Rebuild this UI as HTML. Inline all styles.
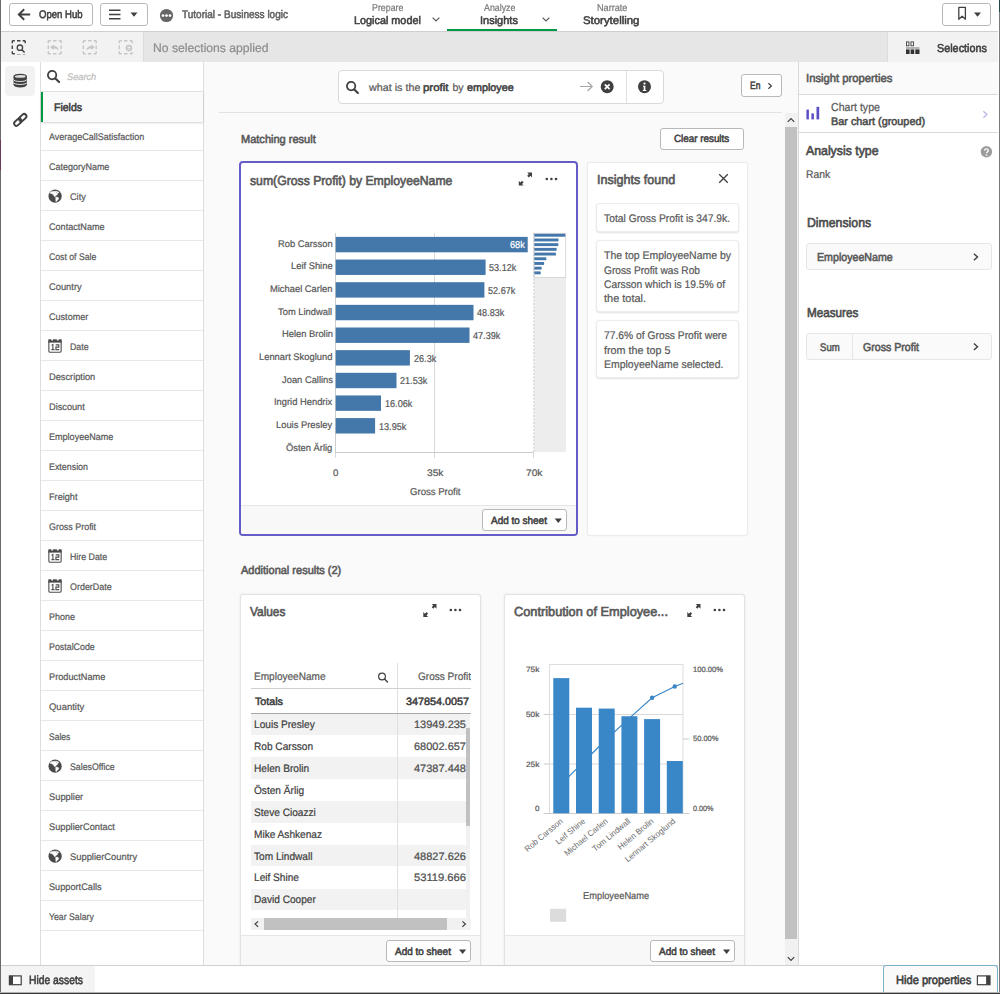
<!DOCTYPE html>
<html lang="en"><head><meta charset="utf-8"><title>Tutorial - Business logic - Insights</title>
<style>
html,body{margin:0;padding:0;}
body{width:1000px;height:994px;position:relative;overflow:hidden;background:#fff;filter:blur(0.3px);font-family:"Liberation Sans",sans-serif;}
.t{position:absolute;white-space:nowrap;transform-origin:0 0;display:block;text-rendering:geometricPrecision;}
.a{position:absolute;display:block;overflow:visible;}
</style></head><body>
<div style="position:absolute;left:204px;top:62px;width:594px;height:903px;background:#fafafa;"></div>
<div style="position:absolute;left:338px;top:70px;width:325.5px;height:33.5px;background:#fff;border:1px solid #d9d9d9;border-radius:4px;box-sizing:border-box;"></div>
<svg class="a" style="left:345px;top:80px" width="15" height="15" viewBox="-0.5 -0.5 15 15"><circle cx="5.6" cy="5.6" r="4.2" fill="none" stroke="#404040" stroke-width="1.8"/><path d="M8.9 8.9L12.4 12.4" stroke="#404040" stroke-width="2.1" stroke-linecap="round"/></svg>
<span class="t" style="left:369.00px;top:83.00px;font-size:10.6px;line-height:10.6px;color:#595959;-webkit-text-stroke:0.22px #595959;transform:scaleX(1.0144);">what is the</span>
<span class="t" style="left:422.80px;top:83.00px;font-size:10.6px;line-height:10.6px;color:#404040;-webkit-text-stroke:0.53px #404040;transform:scaleX(1.0790);">profit</span>
<span class="t" style="left:452.40px;top:83.00px;font-size:10.6px;line-height:10.6px;color:#595959;-webkit-text-stroke:0.22px #595959;">by</span>
<span class="t" style="left:466.80px;top:83.00px;font-size:10.6px;line-height:10.6px;color:#404040;-webkit-text-stroke:0.53px #404040;transform:scaleX(1.0152);">employee</span>
<svg class="a" style="left:579px;top:81px" width="15" height="11" viewBox="0 0 15 11"><path d="M1 5.5H13M8.6 1L13.2 5.5L8.6 10" fill="none" stroke="#a6a6a6" stroke-width="1.2"/></svg>
<svg class="a" style="left:600px;top:80px" width="14.4" height="14.4" viewBox="-0.5 0 14.4 14.4"><circle cx="6.7" cy="6.7" r="6.5" fill="#404040"/><path d="M4.3 4.3L9.1 9.1M9.1 4.3L4.3 9.1" stroke="#fff" stroke-width="1.7"/></svg>
<div style="position:absolute;left:625.5px;top:70.5px;width:1px;height:32.5px;background:#e0e0e0;"></div>
<svg class="a" style="left:637px;top:80px" width="14.4" height="14.4" viewBox="-0.8 0 14.4 14.4"><circle cx="6.7" cy="6.7" r="6.5" fill="#404040"/><circle cx="6.7" cy="3.6" r="1.1" fill="#fff"/><path d="M5.2 5.7H7.6V9.9H8.5V10.9H5V9.9H5.9V6.7H5.2Z" fill="#fff"/></svg>
<div style="position:absolute;left:741px;top:74px;width:40.5px;height:22.5px;background:#fff;border:1px solid #b8b8b8;border-radius:3px;box-sizing:border-box;"></div>
<span class="t" style="left:750.00px;top:81.00px;font-size:10.5px;line-height:10.5px;color:#404040;-webkit-text-stroke:0.53px #404040;transform:scaleX(0.8076);">En</span>
<svg class="a" style="left:767px;top:82px" width="6" height="8" viewBox="0 0 6 8"><path d="M1.4 1.2L4.4 4L1.4 6.8" fill="none" stroke="#404040" stroke-width="1.2"/></svg>
<div style="position:absolute;left:219px;top:111.7px;width:562.5px;height:1px;background:#e2e2e2;"></div>
<div style="position:absolute;left:784.5px;top:113px;width:13px;height:852px;background:#f1f1f1;"></div>
<div style="position:absolute;left:784.6px;top:127px;width:12.4px;height:811.8px;background:#c1c1c1;"></div>
<svg class="a" style="left:786px;top:117px" width="10" height="7" viewBox="-0.5 0 10 7"><path d="M1.3 4.8L4.5 1.6L7.7 4.8" fill="none" stroke="#404040" stroke-width="1.2"/></svg>
<svg class="a" style="left:786px;top:956px" width="10" height="7" viewBox="-0.5 0 10 7"><path d="M1.3 1.2L4.5 4.4L7.7 1.2" fill="none" stroke="#404040" stroke-width="1.2"/></svg>
<span class="t" style="left:240.50px;top:135.00px;font-size:11.5px;line-height:11.5px;color:#595959;-webkit-text-stroke:0.58px #595959;transform:scaleX(0.9585);">Matching result</span>
<div style="position:absolute;left:660px;top:127.5px;width:83.5px;height:22.2px;background:#fff;border:1px solid #b8b8b8;border-radius:3px;box-sizing:border-box;"></div>
<span class="t" style="left:673.80px;top:134.00px;font-size:10.5px;line-height:10.5px;color:#404040;-webkit-text-stroke:0.53px #404040;transform:scaleX(0.9367);">Clear results</span>
<div style="position:absolute;left:239.3px;top:161.3px;width:338.4px;height:375px;background:#fff;border:2px solid #655dc6;border-radius:4px;box-sizing:border-box;"></div>
<span class="t" style="left:249.50px;top:174.00px;font-size:13px;line-height:13px;color:#595959;-webkit-text-stroke:0.65px #595959;transform:scaleX(0.9401);">sum(Gross Profit) by EmployeeName</span>
<svg class="a" style="left:518px;top:172px" width="15" height="14" viewBox="0 0 15 14"><g fill="#404040"><path d="M9.2 0.6H14V5.4L12.4 3.8L10.8 5.4L9.2 3.8L10.8 2.2Z"/><path d="M0.8 13.6V8.8L2.4 10.4L4 8.8L5.6 10.4L4 12L5.6 13.6Z"/></g></svg>
<svg class="a" style="left:545px;top:177px" width="13" height="4" viewBox="0 0 13 4"><g fill="#404040"><circle cx="1.8" cy="2" r="1.3"/><circle cx="6.4" cy="2" r="1.3"/><circle cx="11" cy="2" r="1.3"/></g></svg>
<svg class="a" style="left:241px;top:225px" width="335" height="275" viewBox="241 225 335 275"><path d="M335.5 233V452.5" stroke="#cccccc" stroke-width="1"/><path d="M434.5 233V458M533.5 452V458M335.5 452.5V458" stroke="#d9d9d9" stroke-width="1"/><path d="M335 452.5H533.5" stroke="#cccccc" stroke-width="1"/><rect x="534" y="233" width="32" height="219" fill="#ededed"/><rect x="534" y="233.3" width="31.7" height="44.2" fill="#fff" stroke="#cfcfcf" stroke-width="0.8"/><path d="M533.8 233V452" stroke="#b0b8c8" stroke-width="0.7" stroke-dasharray="2 1.5"/><rect x="335.7" y="236.90" width="192.0" height="15.4" fill="#4477aa"/><rect x="534.3" y="233.80" width="31.0" height="2.9" fill="#4477aa"/><rect x="335.7" y="259.55" width="149.9" height="15.4" fill="#4477aa"/><rect x="534.3" y="238.50" width="24.2" height="2.9" fill="#4477aa"/><rect x="335.7" y="282.20" width="148.7" height="15.4" fill="#4477aa"/><rect x="534.3" y="243.20" width="24.0" height="2.9" fill="#4477aa"/><rect x="335.7" y="304.85" width="137.8" height="15.4" fill="#4477aa"/><rect x="534.3" y="247.90" width="22.3" height="2.9" fill="#4477aa"/><rect x="335.7" y="327.50" width="133.8" height="15.4" fill="#4477aa"/><rect x="534.3" y="252.60" width="21.6" height="2.9" fill="#4477aa"/><rect x="335.7" y="350.15" width="74.2" height="15.4" fill="#4477aa"/><rect x="534.3" y="257.30" width="12.0" height="2.9" fill="#4477aa"/><rect x="335.7" y="372.80" width="60.8" height="15.4" fill="#4477aa"/><rect x="534.3" y="262.00" width="9.8" height="2.9" fill="#4477aa"/><rect x="335.7" y="395.45" width="45.3" height="15.4" fill="#4477aa"/><rect x="534.3" y="266.70" width="7.3" height="2.9" fill="#4477aa"/><rect x="335.7" y="418.10" width="39.4" height="15.4" fill="#4477aa"/><rect x="534.3" y="271.40" width="6.4" height="2.9" fill="#4477aa"/></svg>
<span class="t" style="left:277.97px;top:240.00px;font-size:9.6px;line-height:9.6px;color:#595959;-webkit-text-stroke:0.22px #595959;transform:scaleX(0.9750);">Rob Carsson</span>
<span class="t" style="left:509.67px;top:241.00px;font-size:10px;line-height:10px;color:#fff;-webkit-text-stroke:0.22px #fff;transform:scaleX(0.9200);">68k</span>
<span class="t" style="left:290.97px;top:262.00px;font-size:9.6px;line-height:9.6px;color:#595959;-webkit-text-stroke:0.22px #595959;transform:scaleX(0.9750);">Leif Shine</span>
<span class="t" style="left:489.45px;top:264.00px;font-size:10px;line-height:10px;color:#595959;-webkit-text-stroke:0.22px #595959;transform:scaleX(0.9100);">53.12k</span>
<span class="t" style="left:270.17px;top:285.00px;font-size:9.6px;line-height:9.6px;color:#595959;-webkit-text-stroke:0.22px #595959;transform:scaleX(0.9750);">Michael Carlen</span>
<span class="t" style="left:488.18px;top:287.00px;font-size:10px;line-height:10px;color:#595959;-webkit-text-stroke:0.22px #595959;transform:scaleX(0.9100);">52.67k</span>
<span class="t" style="left:278.49px;top:308.00px;font-size:9.6px;line-height:9.6px;color:#595959;-webkit-text-stroke:0.22px #595959;transform:scaleX(0.9750);">Tom Lindwall</span>
<span class="t" style="left:477.33px;top:309.00px;font-size:10px;line-height:10px;color:#595959;-webkit-text-stroke:0.22px #595959;transform:scaleX(0.9100);">48.83k</span>
<span class="t" style="left:281.61px;top:330.00px;font-size:9.6px;line-height:9.6px;color:#595959;-webkit-text-stroke:0.22px #595959;transform:scaleX(0.9750);">Helen Brolin</span>
<span class="t" style="left:473.27px;top:332.00px;font-size:10px;line-height:10px;color:#595959;-webkit-text-stroke:0.22px #595959;transform:scaleX(0.9100);">47.39k</span>
<span class="t" style="left:259.22px;top:353.00px;font-size:9.6px;line-height:9.6px;color:#595959;-webkit-text-stroke:0.22px #595959;transform:scaleX(0.9750);">Lennart Skoglund</span>
<span class="t" style="left:413.74px;top:355.00px;font-size:10px;line-height:10px;color:#595959;-webkit-text-stroke:0.22px #595959;transform:scaleX(0.9100);">26.3k</span>
<span class="t" style="left:281.61px;top:376.00px;font-size:9.6px;line-height:9.6px;color:#595959;-webkit-text-stroke:0.22px #595959;transform:scaleX(0.9750);">Joan Callins</span>
<span class="t" style="left:400.28px;top:377.00px;font-size:10px;line-height:10px;color:#595959;-webkit-text-stroke:0.22px #595959;transform:scaleX(0.9100);">21.53k</span>
<span class="t" style="left:274.33px;top:398.00px;font-size:9.6px;line-height:9.6px;color:#595959;-webkit-text-stroke:0.22px #595959;transform:scaleX(0.9750);">Ingrid Hendrix</span>
<span class="t" style="left:384.84px;top:400.00px;font-size:10px;line-height:10px;color:#595959;-webkit-text-stroke:0.22px #595959;transform:scaleX(0.9100);">16.06k</span>
<span class="t" style="left:276.41px;top:421.00px;font-size:9.6px;line-height:9.6px;color:#595959;-webkit-text-stroke:0.22px #595959;transform:scaleX(0.9750);">Louis Presley</span>
<span class="t" style="left:378.88px;top:423.00px;font-size:10px;line-height:10px;color:#595959;-webkit-text-stroke:0.22px #595959;transform:scaleX(0.9100);">13.95k</span>
<span class="t" style="left:286.30px;top:444.00px;font-size:9.6px;line-height:9.6px;color:#595959;-webkit-text-stroke:0.22px #595959;transform:scaleX(0.9750);">Östen Ärlig</span>
<span class="t" style="left:333.05px;top:469.00px;font-size:9.5px;line-height:9.5px;color:#595959;-webkit-text-stroke:0.22px #595959;transform:scaleX(1.0220);">0</span>
<span class="t" style="left:426.80px;top:469.00px;font-size:9.5px;line-height:9.5px;color:#595959;-webkit-text-stroke:0.22px #595959;transform:scaleX(1.0707);">35k</span>
<span class="t" style="left:525.60px;top:469.00px;font-size:9.5px;line-height:9.5px;color:#595959;-webkit-text-stroke:0.22px #595959;transform:scaleX(1.0707);">70k</span>
<span class="t" style="left:409.50px;top:488.00px;font-size:10px;line-height:10px;color:#595959;-webkit-text-stroke:0.22px #595959;transform:scaleX(0.9566);">Gross Profit</span>
<div style="position:absolute;left:241.3px;top:504.5px;width:334.4px;height:29.5px;background:#f8f8f8;border-top:1px solid #e6e6e6;box-sizing:border-box;border-radius:0 0 2px 2px;"></div>
<div style="position:absolute;left:482px;top:509px;width:84.6px;height:22px;border:1px solid #b8b8b8;border-radius:3px;box-sizing:border-box;background:#fff;"></div>
<span class="t" style="left:491.00px;top:516.00px;font-size:10.5px;line-height:10.5px;color:#404040;-webkit-text-stroke:0.53px #404040;transform:scaleX(0.9480);">Add to sheet</span>
<svg class="a" style="left:554px;top:518px" width="9" height="6" viewBox="-0.4 -0.2 9 6"><path d="M0.3 0.2h7.2l-3.6 4.6z" fill="#404040"/></svg>
<div style="position:absolute;left:587px;top:162px;width:161px;height:374px;background:#fff;border:1px solid #ebebeb;border-radius:3px;box-sizing:border-box;box-shadow:0 0 2px rgba(0,0,0,.05);"></div>
<span class="t" style="left:596.60px;top:173.00px;font-size:13px;line-height:13px;color:#595959;-webkit-text-stroke:0.65px #595959;transform:scaleX(0.9657);">Insights found</span>
<svg class="a" style="left:718px;top:173px" width="11" height="11" viewBox="0 0 11 11"><path d="M1.2 1.2L9.8 9.8M9.8 1.2L1.2 9.8" stroke="#404040" stroke-width="1.3"/></svg>
<div style="position:absolute;left:596px;top:203px;width:143px;height:29px;background:#fff;border:1px solid #ececec;border-radius:3px;box-sizing:border-box;box-shadow:0 1px 2px rgba(0,0,0,.12);"></div>
<span class="t" style="left:604.00px;top:214.00px;font-size:11px;line-height:11px;color:#595959;-webkit-text-stroke:0.22px #595959;transform:scaleX(0.9368);">Total Gross Profit is 347.9k.</span>
<div style="position:absolute;left:596px;top:240px;width:143px;height:72px;background:#fff;border:1px solid #ececec;border-radius:3px;box-sizing:border-box;box-shadow:0 1px 2px rgba(0,0,0,.12);"></div>
<span class="t" style="left:604.00px;top:251.00px;font-size:11px;line-height:11px;color:#595959;-webkit-text-stroke:0.22px #595959;transform:scaleX(0.9528);">The top EmployeeName by</span>
<span class="t" style="left:604.00px;top:266.00px;font-size:11px;line-height:11px;color:#595959;-webkit-text-stroke:0.22px #595959;transform:scaleX(0.9238);">Gross Profit was Rob</span>
<span class="t" style="left:604.00px;top:280.00px;font-size:11px;line-height:11px;color:#595959;-webkit-text-stroke:0.22px #595959;transform:scaleX(0.9335);">Carsson which is 19.5% of</span>
<span class="t" style="left:604.00px;top:294.00px;font-size:11px;line-height:11px;color:#595959;-webkit-text-stroke:0.22px #595959;transform:scaleX(0.9954);">the total.</span>
<div style="position:absolute;left:596px;top:320px;width:143px;height:58px;background:#fff;border:1px solid #ececec;border-radius:3px;box-sizing:border-box;box-shadow:0 1px 2px rgba(0,0,0,.12);"></div>
<span class="t" style="left:604.00px;top:331.00px;font-size:11px;line-height:11px;color:#595959;-webkit-text-stroke:0.22px #595959;transform:scaleX(0.9358);">77.6% of Gross Profit were</span>
<span class="t" style="left:604.00px;top:346.00px;font-size:11px;line-height:11px;color:#595959;-webkit-text-stroke:0.22px #595959;transform:scaleX(0.9783);">from the top 5</span>
<span class="t" style="left:604.00px;top:360.00px;font-size:11px;line-height:11px;color:#595959;-webkit-text-stroke:0.22px #595959;transform:scaleX(0.9526);">EmployeeName selected.</span>
<span class="t" style="left:240.50px;top:566.00px;font-size:11.5px;line-height:11.5px;color:#595959;-webkit-text-stroke:0.58px #595959;transform:scaleX(0.9563);">Additional results (2)</span>
<div style="position:absolute;left:239.5px;top:593.5px;width:241.5px;height:372px;background:#fff;border:1px solid #e3e3e3;border-radius:3px 3px 0 0;box-sizing:border-box;box-shadow:0 0 2px rgba(0,0,0,.10);"></div>
<span class="t" style="left:249.50px;top:605.00px;font-size:13px;line-height:13px;color:#595959;-webkit-text-stroke:0.65px #595959;transform:scaleX(0.9129);">Values</span>
<svg class="a" style="left:422px;top:603px" width="16" height="15" viewBox="-0.5 -0.3 16 15"><g fill="#404040"><path d="M9.2 0.6H14V5.4L12.4 3.8L10.8 5.4L9.2 3.8L10.8 2.2Z"/><path d="M0.8 13.6V8.8L2.4 10.4L4 8.8L5.6 10.4L4 12L5.6 13.6Z"/></g></svg>
<svg class="a" style="left:449px;top:608px" width="13" height="4" viewBox="0 0 13 4"><g fill="#404040"><circle cx="1.8" cy="2" r="1.3"/><circle cx="6.4" cy="2" r="1.3"/><circle cx="11" cy="2" r="1.3"/></g></svg>
<div style="position:absolute;left:250.5px;top:663px;width:220px;height:268px;overflow:hidden;"><div style="position:absolute;left:0px;top:50.700000000000045px;width:215.8px;height:21.6px;background:#f2f2f2;"></div><div style="position:absolute;left:0px;top:94.40000000000009px;width:215.8px;height:21.6px;background:#f2f2f2;"></div><div style="position:absolute;left:0px;top:138.10000000000002px;width:215.8px;height:21.6px;background:#f2f2f2;"></div><div style="position:absolute;left:0px;top:181.80000000000007px;width:215.8px;height:21.6px;background:#f2f2f2;"></div><div style="position:absolute;left:0px;top:225.5px;width:215.8px;height:21.6px;background:#f2f2f2;"></div><div style="position:absolute;left:146.5px;top:0px;width:1px;height:254.5px;background:#e0e0e0;"></div><div style="position:absolute;left:0px;top:25px;width:220px;height:1px;background:#d0d0d0;"></div><div style="position:absolute;left:0px;top:49.6px;width:220px;height:1px;background:#a8a8a8;"></div><div style="position:absolute;left:215.8px;top:50.6px;width:4.2px;height:204px;background:#f1f1f1;"></div><div style="position:absolute;left:215.8px;top:64.5px;width:4.2px;height:98.7px;background:#c1c1c1;"></div><div style="position:absolute;left:0px;top:255.3px;width:220px;height:11.8px;background:#f1f1f1;"></div><div style="position:absolute;left:13.3px;top:255.3px;width:183.2px;height:11.8px;background:#c1c1c1;"></div><svg class="a" style="left:2px;top:257px" width="7" height="8" viewBox="-0.5 -0.6 7 8"><path d="M4.6 0.8L1.6 3.5L4.6 6.2" fill="none" stroke="#404040" stroke-width="1.2"/></svg><svg class="a" style="left:210px;top:257px" width="7" height="8" viewBox="0 -0.6 7 8"><path d="M1.4 0.8L4.4 3.5L1.4 6.2" fill="none" stroke="#404040" stroke-width="1.2"/></svg></div>
<span class="t" style="left:254.30px;top:672.00px;font-size:10.8px;line-height:10.8px;color:#595959;-webkit-text-stroke:0.22px #595959;transform:scaleX(0.9305);">EmployeeName</span>
<svg class="a" style="left:377px;top:672px" width="12" height="12" viewBox="-0.5 0 12 12"><circle cx="4.5" cy="4.5" r="3.4" fill="none" stroke="#404040" stroke-width="1.2"/><path d="M7 7L10 10" stroke="#404040" stroke-width="1.4" stroke-linecap="round"/></svg>
<div style="position:absolute;left:250.5px;top:663px;width:220px;height:50px;overflow:hidden;"><span class="t" style="left:167.00px;top:9.00px;font-size:10.8px;line-height:10.8px;color:#595959;-webkit-text-stroke:0.22px #595959;transform:scaleX(0.9310);">Gross Profit</span><span class="t" style="left:155.80px;top:34.00px;font-size:10.6px;line-height:10.6px;color:#404040;-webkit-text-stroke:0.53px #404040;transform:scaleX(1.0188);">347854.0057</span></div>
<span class="t" style="left:254.50px;top:697.00px;font-size:10.6px;line-height:10.6px;color:#404040;-webkit-text-stroke:0.53px #404040;transform:scaleX(1.0099);">Totals</span>
<span class="t" style="left:254.30px;top:720.00px;font-size:10.8px;line-height:10.8px;color:#404040;-webkit-text-stroke:0.22px #404040;transform:scaleX(0.9370);">Louis Presley</span>
<span class="t" style="left:414.20px;top:720.00px;font-size:10.8px;line-height:10.8px;color:#4d4d4d;-webkit-text-stroke:0.22px #4d4d4d;transform:scaleX(1.0185);">13949.235</span>
<span class="t" style="left:254.30px;top:742.00px;font-size:10.8px;line-height:10.8px;color:#404040;-webkit-text-stroke:0.22px #404040;transform:scaleX(0.9370);">Rob Carsson</span>
<span class="t" style="left:414.20px;top:742.00px;font-size:10.8px;line-height:10.8px;color:#4d4d4d;-webkit-text-stroke:0.22px #4d4d4d;transform:scaleX(1.0185);">68002.657</span>
<span class="t" style="left:254.30px;top:764.00px;font-size:10.8px;line-height:10.8px;color:#404040;-webkit-text-stroke:0.22px #404040;transform:scaleX(0.9370);">Helen Brolin</span>
<span class="t" style="left:414.20px;top:764.00px;font-size:10.8px;line-height:10.8px;color:#4d4d4d;-webkit-text-stroke:0.22px #4d4d4d;transform:scaleX(1.0185);">47387.448</span>
<span class="t" style="left:254.30px;top:786.00px;font-size:10.8px;line-height:10.8px;color:#404040;-webkit-text-stroke:0.22px #404040;transform:scaleX(0.9370);">Östen Ärlig</span>
<span class="t" style="left:254.30px;top:808.00px;font-size:10.8px;line-height:10.8px;color:#404040;-webkit-text-stroke:0.22px #404040;transform:scaleX(0.9370);">Steve Cioazzi</span>
<span class="t" style="left:254.30px;top:830.00px;font-size:10.8px;line-height:10.8px;color:#404040;-webkit-text-stroke:0.22px #404040;transform:scaleX(0.9370);">Mike Ashkenaz</span>
<span class="t" style="left:254.30px;top:852.00px;font-size:10.8px;line-height:10.8px;color:#404040;-webkit-text-stroke:0.22px #404040;transform:scaleX(0.9370);">Tom Lindwall</span>
<span class="t" style="left:414.20px;top:852.00px;font-size:10.8px;line-height:10.8px;color:#4d4d4d;-webkit-text-stroke:0.22px #4d4d4d;transform:scaleX(1.0185);">48827.626</span>
<span class="t" style="left:254.30px;top:873.00px;font-size:10.8px;line-height:10.8px;color:#404040;-webkit-text-stroke:0.22px #404040;transform:scaleX(0.9370);">Leif Shine</span>
<span class="t" style="left:414.20px;top:873.00px;font-size:10.8px;line-height:10.8px;color:#4d4d4d;-webkit-text-stroke:0.22px #4d4d4d;transform:scaleX(1.0348);">53119.666</span>
<span class="t" style="left:254.30px;top:895.00px;font-size:10.8px;line-height:10.8px;color:#404040;-webkit-text-stroke:0.22px #404040;transform:scaleX(0.9370);">David Cooper</span>
<div style="position:absolute;left:240.5px;top:935.3px;width:239.5px;height:30px;background:#f8f8f8;border-top:1px solid #e6e6e6;box-sizing:border-box;"></div>
<div style="position:absolute;left:386.3px;top:940px;width:84.6px;height:22px;border:1px solid #b8b8b8;border-radius:3px;box-sizing:border-box;background:#fff;"></div>
<span class="t" style="left:395.30px;top:947.00px;font-size:10.5px;line-height:10.5px;color:#404040;-webkit-text-stroke:0.53px #404040;transform:scaleX(0.9480);">Add to sheet</span>
<svg class="a" style="left:458px;top:949px" width="9" height="6" viewBox="-0.7 -0.2 9 6"><path d="M0.3 0.2h7.2l-3.6 4.6z" fill="#404040"/></svg>
<div style="position:absolute;left:504px;top:593.5px;width:241px;height:372px;background:#fff;border:1px solid #e3e3e3;border-radius:3px 3px 0 0;box-sizing:border-box;box-shadow:0 0 2px rgba(0,0,0,.10);"></div>
<span class="t" style="left:514.00px;top:605.00px;font-size:13px;line-height:13px;color:#595959;-webkit-text-stroke:0.65px #595959;transform:scaleX(0.9818);">Contribution of Employee...</span>
<svg class="a" style="left:686px;top:603px" width="16" height="15" viewBox="-0.5 -0.3 16 15"><g fill="#404040"><path d="M9.2 0.6H14V5.4L12.4 3.8L10.8 5.4L9.2 3.8L10.8 2.2Z"/><path d="M0.8 13.6V8.8L2.4 10.4L4 8.8L5.6 10.4L4 12L5.6 13.6Z"/></g></svg>
<svg class="a" style="left:713px;top:608px" width="13" height="4" viewBox="0 0 13 4"><g fill="#404040"><circle cx="1.8" cy="2" r="1.3"/><circle cx="6.4" cy="2" r="1.3"/><circle cx="11" cy="2" r="1.3"/></g></svg>
<svg class="a" style="left:505px;top:650px" width="239" height="280" viewBox="505 650 239 280"><rect x="549.4" y="664.6" width="133.6" height="148.9" fill="#fff" stroke="#d9d9d9" stroke-width="0.9"/><path d="M549.4 714.5H683M549.4 764H683" stroke="#d9d9d9" stroke-width="1"/><path d="M543.7 714.5H549.4M543.7 764H549.4M543.7 813.5H689.5M683 739H689.5" stroke="#cccccc" stroke-width="1"/><path d="M561.3 784.2 L584.0 761.5 L606.7 739.0 L629.4 718.1 L652.1 697.8 L674.8 686.5 L683.0 683.2" fill="none" stroke="#3a87c8" stroke-width="1.15"/><rect x="553.3" y="678.11" width="16" height="135.19" fill="#3a87c8"/><rect x="576.0" y="707.70" width="16" height="105.60" fill="#3a87c8"/><rect x="598.7" y="708.59" width="16" height="104.71" fill="#3a87c8"/><rect x="621.4" y="716.23" width="16" height="97.07" fill="#3a87c8"/><rect x="644.1" y="719.09" width="16" height="94.21" fill="#3a87c8"/><rect x="666.8" y="761.02" width="16" height="52.28" fill="#3a87c8"/><circle cx="652.1" cy="697.8" r="2.2" fill="#3a87c8"/><circle cx="674.8" cy="686.5" r="2.2" fill="#3a87c8"/><rect x="550" y="908.8" width="16.2" height="13" fill="#dcdcdc"/></svg>
<span class="t" style="left:526.35px;top:666.00px;font-size:7.7px;line-height:7.7px;color:#595959;-webkit-text-stroke:0.22px #595959;transform:scaleX(1.0673);">75k</span>
<span class="t" style="left:526.35px;top:711.00px;font-size:7.7px;line-height:7.7px;color:#595959;-webkit-text-stroke:0.22px #595959;transform:scaleX(1.0673);">50k</span>
<span class="t" style="left:526.35px;top:761.00px;font-size:7.7px;line-height:7.7px;color:#595959;-webkit-text-stroke:0.22px #595959;transform:scaleX(1.0673);">25k</span>
<span class="t" style="left:535.10px;top:805.00px;font-size:7.7px;line-height:7.7px;color:#595959;-webkit-text-stroke:0.22px #595959;transform:scaleX(1.0508);">0</span>
<span class="t" style="left:693.30px;top:666.00px;font-size:7.7px;line-height:7.7px;color:#595959;-webkit-text-stroke:0.22px #595959;transform:scaleX(0.9869);">100.00%</span>
<span class="t" style="left:693.30px;top:735.00px;font-size:7.7px;line-height:7.7px;color:#595959;-webkit-text-stroke:0.22px #595959;transform:scaleX(0.9764);">50.00%</span>
<span class="t" style="left:693.30px;top:805.00px;font-size:7.7px;line-height:7.7px;color:#595959;-webkit-text-stroke:0.22px #595959;transform:scaleX(0.9389);">0.00%</span>
<span class="t" style="left:516.01px;top:815.47px;font-size:8.3px;line-height:8.3px;color:#6a6a6a;transform-origin:100% 84.65%;transform:rotate(-40deg) scaleX(0.97);width:48.44px;margin-left:-1.45px">Rob Carsson</span>
<span class="t" style="left:549.89px;top:815.47px;font-size:8.3px;line-height:8.3px;color:#6a6a6a;transform-origin:100% 84.65%;transform:rotate(-40deg) scaleX(0.97);width:36.92px;margin-left:-1.11px">Leif Shine</span>
<span class="t" style="left:554.70px;top:815.47px;font-size:8.3px;line-height:8.3px;color:#6a6a6a;transform-origin:100% 84.65%;transform:rotate(-40deg) scaleX(0.97);width:55.36px;margin-left:-1.66px">Michael Carlen</span>
<span class="t" style="left:584.56px;top:815.47px;font-size:8.3px;line-height:8.3px;color:#6a6a6a;transform-origin:100% 84.65%;transform:rotate(-40deg) scaleX(0.97);width:47.98px;margin-left:-1.44px">Tom Lindwall</span>
<span class="t" style="left:609.94px;top:815.47px;font-size:8.3px;line-height:8.3px;color:#6a6a6a;transform-origin:100% 84.65%;transform:rotate(-40deg) scaleX(0.97);width:45.21px;margin-left:-1.36px">Helen Brolin</span>
<span class="t" style="left:613.38px;top:815.47px;font-size:8.3px;line-height:8.3px;color:#6a6a6a;transform-origin:100% 84.65%;transform:rotate(-40deg) scaleX(0.97);width:65.07px;margin-left:-1.95px">Lennart Skoglund</span>
<span class="t" style="left:583.30px;top:892.00px;font-size:10px;line-height:10px;color:#595959;-webkit-text-stroke:0.22px #595959;transform:scaleX(0.9305);">EmployeeName</span>
<div style="position:absolute;left:505px;top:935.3px;width:239px;height:30px;background:#f8f8f8;border-top:1px solid #e6e6e6;box-sizing:border-box;"></div>
<div style="position:absolute;left:650.3px;top:940px;width:84.6px;height:22px;border:1px solid #b8b8b8;border-radius:3px;box-sizing:border-box;background:#fff;"></div>
<span class="t" style="left:659.30px;top:947.00px;font-size:10.5px;line-height:10.5px;color:#404040;-webkit-text-stroke:0.53px #404040;transform:scaleX(0.9480);">Add to sheet</span>
<svg class="a" style="left:722px;top:949px" width="9" height="6" viewBox="-0.7 -0.2 9 6"><path d="M0.3 0.2h7.2l-3.6 4.6z" fill="#404040"/></svg>
<div style="position:absolute;left:0px;top:0px;width:1000px;height:31px;background:#fff;border-bottom:1px solid #cfcfcf;box-sizing:content-box;"></div>
<div style="position:absolute;left:9px;top:3px;width:84px;height:23px;border:1px solid #b8b8b8;border-radius:3px;box-sizing:border-box;background:#fff;"></div>
<svg class="a" style="left:17px;top:8px" width="14" height="13" viewBox="0 0 14 13"><path d="M7.2 1.2 L1.8 6.5 L7.2 11.8 M2 6.5 H13.2" fill="none" stroke="#404040" stroke-width="1.9"/></svg>
<span class="t" style="left:39.00px;top:10.00px;font-size:11px;line-height:11px;color:#404040;-webkit-text-stroke:0.55px #404040;transform:scaleX(0.8679);">Open Hub</span>
<div style="position:absolute;left:100px;top:3px;width:48px;height:23px;border:1px solid #b8b8b8;border-radius:3px;box-sizing:border-box;background:#fff;"></div>
<svg class="a" style="left:108px;top:8px" width="36" height="13" viewBox="0 0 36 13"><path d="M1 2.2H12.5M1 6.5H12.5M1 10.8H12.5" stroke="#404040" stroke-width="1.5"/><path d="M22.5 4.6h7l-3.5 4.2z" fill="#404040"/></svg>
<svg class="a" style="left:159px;top:8px" width="15" height="15" viewBox="0 0 15 15"><circle cx="7.5" cy="7.5" r="6.6" fill="#666"/><circle cx="4" cy="7.6" r="1.35" fill="#fff"/><circle cx="7.5" cy="7.6" r="1.35" fill="#fff"/><circle cx="11" cy="7.6" r="1.35" fill="#fff"/></svg>
<span class="t" style="left:181.50px;top:10.00px;font-size:11px;line-height:11px;color:#636363;-webkit-text-stroke:0.55px #636363;transform:scaleX(0.9109);">Tutorial - Business logic</span>
<span class="t" style="left:371.60px;top:4.00px;font-size:10px;line-height:10px;color:#7a7a7a;-webkit-text-stroke:0.22px #7a7a7a;transform:scaleX(0.8826);">Prepare</span>
<span class="t" style="left:353.60px;top:16.00px;font-size:11px;line-height:11px;color:#404040;-webkit-text-stroke:0.55px #404040;transform:scaleX(0.9850);">Logical model</span>
<svg class="a" style="left:431px;top:16px" width="10" height="7" viewBox="0 0 10 7"><path d="M1.6 1.6 L5 5 L8.4 1.6" fill="none" stroke="#595959" stroke-width="1.2"/></svg>
<span class="t" style="left:483.60px;top:4.00px;font-size:10px;line-height:10px;color:#7a7a7a;-webkit-text-stroke:0.22px #7a7a7a;transform:scaleX(0.8826);">Analyze</span>
<span class="t" style="left:480.00px;top:16.00px;font-size:11px;line-height:11px;color:#404040;-webkit-text-stroke:0.55px #404040;">Insights</span>
<svg class="a" style="left:541px;top:16px" width="10" height="7" viewBox="0 0 10 7"><path d="M1.6 1.6 L5 5 L8.4 1.6" fill="none" stroke="#595959" stroke-width="1.2"/></svg>
<div style="position:absolute;left:447.4px;top:28.6px;width:109.2px;height:2.6px;background:#009845;"></div>
<span class="t" style="left:596.60px;top:4.00px;font-size:10px;line-height:10px;color:#7a7a7a;-webkit-text-stroke:0.22px #7a7a7a;transform:scaleX(0.9117);">Narrate</span>
<span class="t" style="left:583.40px;top:16.00px;font-size:11px;line-height:11px;color:#404040;-webkit-text-stroke:0.55px #404040;transform:scaleX(1.0370);">Storytelling</span>
<div style="position:absolute;left:942px;top:3px;width:49px;height:23px;border:1px solid #b8b8b8;border-radius:3px;box-sizing:border-box;background:#fff;"></div>
<svg class="a" style="left:957px;top:6px" width="26" height="16" viewBox="0 0 26 16"><path d="M1.8 1.4H8.4V13.2L5.1 10.3L1.8 13.2Z" fill="none" stroke="#404040" stroke-width="1.3" stroke-linejoin="round"/><path d="M17 6.6h7l-3.5 4.2z" fill="#404040"/></svg>
<div style="position:absolute;left:0px;top:32px;width:1000px;height:29.5px;background:#e6e6e6;"></div>
<div style="position:absolute;left:0px;top:32px;width:143px;height:29.5px;background:#f2f2f2;border-right:1px solid #dcdcdc;"></div>
<div style="position:absolute;left:886.6px;top:32px;width:113.4px;height:29.5px;background:#f2f2f2;border-left:1px solid #dcdcdc;"></div>
<svg class="a" style="left:11px;top:39px" width="16" height="16" viewBox="0 0 16 16"><rect x="1.3" y="1.8" width="12.9" height="12.9" fill="none" stroke="#404040" stroke-width="1.4" stroke-dasharray="2.5 2.2 3.5 2.2 2.5 0"/><rect x="6" y="6.2" width="9" height="9" fill="#f2f2f2"/><circle cx="8.9" cy="8.7" r="2.7" fill="#f2f2f2" stroke="#404040" stroke-width="1.3"/><path d="M10.9 10.8L13.6 13.6" stroke="#404040" stroke-width="1.5"/></svg>
<svg class="a" style="left:47px;top:39px" width="16" height="16" viewBox="0 0 16 16"><rect x="1.3" y="1.8" width="12.9" height="12.9" fill="none" stroke="#c6c6c6" stroke-width="1.4" stroke-dasharray="2.5 2.2 3.5 2.2 2.5 0"/><rect x="3" y="5" width="9" height="8" fill="#f2f2f2"/><path d="M3.2 8.2L6.8 5.4V7.1C9.6 7.1 11.4 8.6 11.6 11.6C10.6 9.9 9.2 9.4 6.8 9.4V11Z" fill="#c6c6c6"/></svg>
<svg class="a" style="left:82px;top:39px" width="16" height="16" viewBox="0 0 16 16"><rect x="1.3" y="1.8" width="12.9" height="12.9" fill="none" stroke="#c6c6c6" stroke-width="1.4" stroke-dasharray="2.5 2.2 3.5 2.2 2.5 0"/><rect x="4" y="5" width="9" height="8" fill="#f2f2f2"/><path d="M12.8 8.2L9.2 5.4V7.1C6.4 7.1 4.6 8.6 4.4 11.6C5.4 9.9 6.8 9.4 9.2 9.4V11Z" fill="#c6c6c6"/></svg>
<svg class="a" style="left:118px;top:39px" width="16" height="16" viewBox="0 0 16 16"><rect x="1.3" y="1.8" width="12.9" height="12.9" fill="none" stroke="#c6c6c6" stroke-width="1.4" stroke-dasharray="2.5 2.2 3.5 2.2 2.5 0"/><rect x="7" y="5" width="8" height="8" fill="#f2f2f2"/><circle cx="10.9" cy="9.1" r="3.3" fill="#c6c6c6"/><path d="M9.5 7.7L12.3 10.5M12.3 7.7L9.5 10.5" stroke="#f2f2f2" stroke-width="1.1"/></svg>
<span class="t" style="left:152.50px;top:42.00px;font-size:12.3px;line-height:12.3px;color:#8c8c8c;-webkit-text-stroke:0.22px #8c8c8c;transform:scaleX(0.9878);">No selections applied</span>
<svg class="a" style="left:905px;top:40px" width="15" height="15" viewBox="0 0 15 15"><rect x="1.45" y="1.9" width="2.5" height="3.9" fill="none" stroke="#404040" stroke-width="0.9"/><rect x="5.95" y="1.9" width="2.5" height="3.9" fill="none" stroke="#404040" stroke-width="0.9"/><rect x="1" y="7.4" width="13.5" height="1.2" fill="#8a8a8a"/><rect x="1" y="9.4" width="3.6" height="4.6" fill="#333"/><rect x="5.6" y="9.4" width="3.6" height="4.6" fill="#333"/><rect x="10.3" y="9.4" width="4.2" height="4.6" fill="#333"/></svg>
<span class="t" style="left:936.60px;top:44.00px;font-size:11.5px;line-height:11.5px;color:#404040;-webkit-text-stroke:0.58px #404040;transform:scaleX(0.9396);">Selections</span>
<div style="position:absolute;left:0px;top:62px;width:40px;height:903px;background:#fff;"></div>
<div style="position:absolute;left:5px;top:66px;width:30px;height:30px;background:#f2f2f2;border-radius:4px;"></div>
<svg class="a" style="left:13px;top:73px" width="15.4" height="15.4" viewBox="0 -0.4 15.4 15.4"><path d="M0.5 3V11.4A6.7 2.6 0 0 0 13.9 11.4V3Z" fill="#404040"/><ellipse cx="7.2" cy="3" rx="6.1" ry="2.1" fill="#dcdcdc" stroke="#404040" stroke-width="1.3"/><path d="M0.5 6.1A6.7 2 0 0 0 13.9 6.1M0.5 9.1A6.7 2 0 0 0 13.9 9.1" fill="none" stroke="#f2f2f2" stroke-width="0.9"/></svg>
<svg class="a" style="left:13px;top:112px" width="15.6" height="15.6" viewBox="0 -0.6 15.6 15.6"><g transform="translate(7.3,7.3) rotate(-43)" fill="none" stroke="#404040" stroke-width="1.9"><rect x="-7.55" y="-2.3" width="8.45" height="4.6" rx="2.3"/><rect x="-0.9" y="-2.3" width="8.45" height="4.6" rx="2.3"/></g></svg>
<div style="position:absolute;left:39.5px;top:62px;width:164px;height:903px;background:#fff;border-left:1px solid #dedede;border-right:1px solid #dedede;box-sizing:border-box;"></div>
<svg class="a" style="left:46px;top:69px" width="15" height="15" viewBox="-0.5 -0.5 15 15"><circle cx="5.6" cy="5.6" r="4.2" fill="none" stroke="#404040" stroke-width="1.8"/><path d="M8.9 8.9L12.6 12.6" stroke="#404040" stroke-width="2.1" stroke-linecap="round"/></svg>
<span class="t" style="left:66.50px;top:73.00px;font-size:9.6px;line-height:9.6px;color:#bdbdbd;-webkit-text-stroke:0.22px #bdbdbd;font-style:italic;transform:scaleX(0.9599);">Search</span>
<div style="position:absolute;left:40.5px;top:91px;width:162.5px;height:1px;background:#e3e3e3;"></div>
<div style="position:absolute;left:40.5px;top:92px;width:162.5px;height:29.5px;background:#fafafa;box-shadow:0 1px 2px rgba(0,0,0,.18);"></div>
<div style="position:absolute;left:40.5px;top:92px;width:2.7px;height:29.5px;background:#009845;"></div>
<span class="t" style="left:53.70px;top:103.00px;font-size:11px;line-height:11px;color:#404040;-webkit-text-stroke:0.55px #404040;transform:scaleX(0.9567);">Fields</span>
<span class="t" style="left:48.50px;top:133.00px;font-size:9.6px;line-height:9.6px;color:#595959;-webkit-text-stroke:0.22px #595959;transform:scaleX(0.9376);">AverageCallSatisfaction</span>
<div style="position:absolute;left:40.5px;top:150px;width:162.5px;height:1px;background:#e8e8e8;"></div>
<span class="t" style="left:48.50px;top:163.00px;font-size:9.6px;line-height:9.6px;color:#595959;-webkit-text-stroke:0.22px #595959;transform:scaleX(0.9355);">CategoryName</span>
<div style="position:absolute;left:40.5px;top:180px;width:162.5px;height:1px;background:#e8e8e8;"></div>
<svg class="a" style="left:48px;top:189px" width="15" height="15" viewBox="0 0 15 15"><g transform="translate(0.4,0.5)"><circle cx="6.7" cy="6.7" r="6.6" fill="#4a4a4a"/><path d="M1.8 2.9 L3.2 2.1 L6 1.8 L8.6 1.7 L10.7 3 L9.6 3.7 L8.6 4.5 L9.2 5.2 L7.8 5.7 L7 6.9 L6.2 7.2 L5.3 6.1 L4.5 4.8 L3.3 4.2 L1.9 4Z M7.2 7.8 L8.7 7.5 L10.5 8.5 L9.9 9.9 L8.8 10.9 L8 12 L7.4 12 L7.3 9.7Z" fill="#fff" stroke="#fff" stroke-width="0.35" stroke-linejoin="round"/><path d="M7.4 2.5 L9 2.7 L8.2 3.4Z" fill="#999"/></g></svg>
<span class="t" style="left:69.70px;top:193.00px;font-size:9.6px;line-height:9.6px;color:#595959;-webkit-text-stroke:0.22px #595959;transform:scaleX(0.9557);">City</span>
<div style="position:absolute;left:40.5px;top:210px;width:162.5px;height:1px;background:#e8e8e8;"></div>
<span class="t" style="left:48.50px;top:223.00px;font-size:9.6px;line-height:9.6px;color:#595959;-webkit-text-stroke:0.22px #595959;transform:scaleX(0.9473);">ContactName</span>
<div style="position:absolute;left:40.5px;top:240px;width:162.5px;height:1px;background:#e8e8e8;"></div>
<span class="t" style="left:48.50px;top:253.00px;font-size:9.6px;line-height:9.6px;color:#595959;-webkit-text-stroke:0.22px #595959;transform:scaleX(0.9045);">Cost of Sale</span>
<div style="position:absolute;left:40.5px;top:270px;width:162.5px;height:1px;background:#e8e8e8;"></div>
<span class="t" style="left:48.50px;top:283.00px;font-size:9.6px;line-height:9.6px;color:#595959;-webkit-text-stroke:0.22px #595959;transform:scaleX(0.9728);">Country</span>
<div style="position:absolute;left:40.5px;top:300px;width:162.5px;height:1px;background:#e8e8e8;"></div>
<span class="t" style="left:48.50px;top:313.00px;font-size:9.6px;line-height:9.6px;color:#595959;-webkit-text-stroke:0.22px #595959;transform:scaleX(0.9444);">Customer</span>
<div style="position:absolute;left:40.5px;top:330px;width:162.5px;height:1px;background:#e8e8e8;"></div>
<svg class="a" style="left:48px;top:339px" width="14.8" height="14.8" viewBox="-0.2 -0.2 14.8 14.8"><rect x="0.65" y="1.9" width="12.3" height="11.1" rx="1.2" fill="#fff" stroke="#4d4d4d" stroke-width="1.1"/><rect x="0.1" y="1.7" width="13.4" height="1.7" fill="#4a4a4a"/><rect x="0.1" y="0.1" width="3" height="2" rx="0.5" fill="#4a4a4a"/><rect x="4.8" y="0.1" width="3.9" height="2" fill="#4a4a4a"/><rect x="10.4" y="0.1" width="3.1" height="2" rx="0.5" fill="#4a4a4a"/><path d="M3.3 6.2L4.7 5.3V10.4M3.2 10.4H6.3 M7.5 5.7H10.6V7.9H7.7V10.4H11" fill="none" stroke="#4d4d4d" stroke-width="1.1"/></svg>
<span class="t" style="left:69.70px;top:343.00px;font-size:9.6px;line-height:9.6px;color:#595959;-webkit-text-stroke:0.22px #595959;transform:scaleX(0.9172);">Date</span>
<div style="position:absolute;left:40.5px;top:360px;width:162.5px;height:1px;background:#e8e8e8;"></div>
<span class="t" style="left:48.50px;top:373.00px;font-size:9.6px;line-height:9.6px;color:#595959;-webkit-text-stroke:0.22px #595959;transform:scaleX(0.9642);">Description</span>
<div style="position:absolute;left:40.5px;top:390px;width:162.5px;height:1px;background:#e8e8e8;"></div>
<span class="t" style="left:48.50px;top:403.00px;font-size:9.6px;line-height:9.6px;color:#595959;-webkit-text-stroke:0.22px #595959;transform:scaleX(0.9585);">Discount</span>
<div style="position:absolute;left:40.5px;top:420px;width:162.5px;height:1px;background:#e8e8e8;"></div>
<span class="t" style="left:48.50px;top:433.00px;font-size:9.6px;line-height:9.6px;color:#595959;-webkit-text-stroke:0.22px #595959;transform:scaleX(0.9429);">EmployeeName</span>
<div style="position:absolute;left:40.5px;top:450px;width:162.5px;height:1px;background:#e8e8e8;"></div>
<span class="t" style="left:48.50px;top:463.00px;font-size:9.6px;line-height:9.6px;color:#595959;-webkit-text-stroke:0.22px #595959;transform:scaleX(0.9250);">Extension</span>
<div style="position:absolute;left:40.5px;top:480px;width:162.5px;height:1px;background:#e8e8e8;"></div>
<span class="t" style="left:48.50px;top:493.00px;font-size:9.6px;line-height:9.6px;color:#595959;-webkit-text-stroke:0.22px #595959;transform:scaleX(0.9538);">Freight</span>
<div style="position:absolute;left:40.5px;top:510px;width:162.5px;height:1px;background:#e8e8e8;"></div>
<span class="t" style="left:48.50px;top:523.00px;font-size:9.6px;line-height:9.6px;color:#595959;-webkit-text-stroke:0.22px #595959;transform:scaleX(0.9294);">Gross Profit</span>
<div style="position:absolute;left:40.5px;top:540px;width:162.5px;height:1px;background:#e8e8e8;"></div>
<svg class="a" style="left:48px;top:549px" width="14.8" height="14.8" viewBox="-0.2 -0.2 14.8 14.8"><rect x="0.65" y="1.9" width="12.3" height="11.1" rx="1.2" fill="#fff" stroke="#4d4d4d" stroke-width="1.1"/><rect x="0.1" y="1.7" width="13.4" height="1.7" fill="#4a4a4a"/><rect x="0.1" y="0.1" width="3" height="2" rx="0.5" fill="#4a4a4a"/><rect x="4.8" y="0.1" width="3.9" height="2" fill="#4a4a4a"/><rect x="10.4" y="0.1" width="3.1" height="2" rx="0.5" fill="#4a4a4a"/><path d="M3.3 6.2L4.7 5.3V10.4M3.2 10.4H6.3 M7.5 5.7H10.6V7.9H7.7V10.4H11" fill="none" stroke="#4d4d4d" stroke-width="1.1"/></svg>
<span class="t" style="left:69.70px;top:553.00px;font-size:9.6px;line-height:9.6px;color:#595959;-webkit-text-stroke:0.22px #595959;transform:scaleX(0.9174);">Hire Date</span>
<div style="position:absolute;left:40.5px;top:570px;width:162.5px;height:1px;background:#e8e8e8;"></div>
<svg class="a" style="left:48px;top:579px" width="14.8" height="14.8" viewBox="-0.2 -0.2 14.8 14.8"><rect x="0.65" y="1.9" width="12.3" height="11.1" rx="1.2" fill="#fff" stroke="#4d4d4d" stroke-width="1.1"/><rect x="0.1" y="1.7" width="13.4" height="1.7" fill="#4a4a4a"/><rect x="0.1" y="0.1" width="3" height="2" rx="0.5" fill="#4a4a4a"/><rect x="4.8" y="0.1" width="3.9" height="2" fill="#4a4a4a"/><rect x="10.4" y="0.1" width="3.1" height="2" rx="0.5" fill="#4a4a4a"/><path d="M3.3 6.2L4.7 5.3V10.4M3.2 10.4H6.3 M7.5 5.7H10.6V7.9H7.7V10.4H11" fill="none" stroke="#4d4d4d" stroke-width="1.1"/></svg>
<span class="t" style="left:69.70px;top:583.00px;font-size:9.6px;line-height:9.6px;color:#595959;-webkit-text-stroke:0.22px #595959;transform:scaleX(0.9304);">OrderDate</span>
<div style="position:absolute;left:40.5px;top:600px;width:162.5px;height:1px;background:#e8e8e8;"></div>
<span class="t" style="left:48.50px;top:613.00px;font-size:9.6px;line-height:9.6px;color:#595959;-webkit-text-stroke:0.22px #595959;transform:scaleX(0.9330);">Phone</span>
<div style="position:absolute;left:40.5px;top:630px;width:162.5px;height:1px;background:#e8e8e8;"></div>
<span class="t" style="left:48.50px;top:643.00px;font-size:9.6px;line-height:9.6px;color:#595959;-webkit-text-stroke:0.22px #595959;transform:scaleX(0.9228);">PostalCode</span>
<div style="position:absolute;left:40.5px;top:660px;width:162.5px;height:1px;background:#e8e8e8;"></div>
<span class="t" style="left:48.50px;top:673.00px;font-size:9.6px;line-height:9.6px;color:#595959;-webkit-text-stroke:0.22px #595959;transform:scaleX(0.9609);">ProductName</span>
<div style="position:absolute;left:40.5px;top:690px;width:162.5px;height:1px;background:#e8e8e8;"></div>
<span class="t" style="left:48.50px;top:703.00px;font-size:9.6px;line-height:9.6px;color:#595959;-webkit-text-stroke:0.22px #595959;transform:scaleX(0.9874);">Quantity</span>
<div style="position:absolute;left:40.5px;top:720px;width:162.5px;height:1px;background:#e8e8e8;"></div>
<span class="t" style="left:48.50px;top:733.00px;font-size:9.6px;line-height:9.6px;color:#595959;-webkit-text-stroke:0.22px #595959;transform:scaleX(0.8911);">Sales</span>
<div style="position:absolute;left:40.5px;top:750px;width:162.5px;height:1px;background:#e8e8e8;"></div>
<svg class="a" style="left:48px;top:759px" width="15" height="15" viewBox="0 0 15 15"><g transform="translate(0.4,0.5)"><circle cx="6.7" cy="6.7" r="6.6" fill="#4a4a4a"/><path d="M1.8 2.9 L3.2 2.1 L6 1.8 L8.6 1.7 L10.7 3 L9.6 3.7 L8.6 4.5 L9.2 5.2 L7.8 5.7 L7 6.9 L6.2 7.2 L5.3 6.1 L4.5 4.8 L3.3 4.2 L1.9 4Z M7.2 7.8 L8.7 7.5 L10.5 8.5 L9.9 9.9 L8.8 10.9 L8 12 L7.4 12 L7.3 9.7Z" fill="#fff" stroke="#fff" stroke-width="0.35" stroke-linejoin="round"/><path d="M7.4 2.5 L9 2.7 L8.2 3.4Z" fill="#999"/></g></svg>
<span class="t" style="left:69.70px;top:763.00px;font-size:9.6px;line-height:9.6px;color:#595959;-webkit-text-stroke:0.22px #595959;transform:scaleX(0.9138);">SalesOffice</span>
<div style="position:absolute;left:40.5px;top:780px;width:162.5px;height:1px;background:#e8e8e8;"></div>
<span class="t" style="left:48.50px;top:793.00px;font-size:9.6px;line-height:9.6px;color:#595959;-webkit-text-stroke:0.22px #595959;transform:scaleX(0.9709);">Supplier</span>
<div style="position:absolute;left:40.5px;top:810px;width:162.5px;height:1px;background:#e8e8e8;"></div>
<span class="t" style="left:48.50px;top:823.00px;font-size:9.6px;line-height:9.6px;color:#595959;-webkit-text-stroke:0.22px #595959;transform:scaleX(0.9647);">SupplierContact</span>
<div style="position:absolute;left:40.5px;top:840px;width:162.5px;height:1px;background:#e8e8e8;"></div>
<svg class="a" style="left:48px;top:849px" width="15" height="15" viewBox="0 0 15 15"><g transform="translate(0.4,0.5)"><circle cx="6.7" cy="6.7" r="6.6" fill="#4a4a4a"/><path d="M1.8 2.9 L3.2 2.1 L6 1.8 L8.6 1.7 L10.7 3 L9.6 3.7 L8.6 4.5 L9.2 5.2 L7.8 5.7 L7 6.9 L6.2 7.2 L5.3 6.1 L4.5 4.8 L3.3 4.2 L1.9 4Z M7.2 7.8 L8.7 7.5 L10.5 8.5 L9.9 9.9 L8.8 10.9 L8 12 L7.4 12 L7.3 9.7Z" fill="#fff" stroke="#fff" stroke-width="0.35" stroke-linejoin="round"/><path d="M7.4 2.5 L9 2.7 L8.2 3.4Z" fill="#999"/></g></svg>
<span class="t" style="left:69.70px;top:853.00px;font-size:9.6px;line-height:9.6px;color:#595959;-webkit-text-stroke:0.22px #595959;transform:scaleX(0.9747);">SupplierCountry</span>
<div style="position:absolute;left:40.5px;top:870px;width:162.5px;height:1px;background:#e8e8e8;"></div>
<span class="t" style="left:48.50px;top:883.00px;font-size:9.6px;line-height:9.6px;color:#595959;-webkit-text-stroke:0.22px #595959;transform:scaleX(0.9570);">SupportCalls</span>
<div style="position:absolute;left:40.5px;top:900px;width:162.5px;height:1px;background:#e8e8e8;"></div>
<span class="t" style="left:48.50px;top:913.00px;font-size:9.6px;line-height:9.6px;color:#595959;-webkit-text-stroke:0.22px #595959;transform:scaleX(0.9091);">Year Salary</span>
<div style="position:absolute;left:40.5px;top:930px;width:162.5px;height:1px;background:#e8e8e8;"></div>
<div style="position:absolute;left:797.5px;top:62px;width:202.5px;height:903px;background:#fff;border-left:1px solid #d9d9d9;box-sizing:border-box;"></div>
<div style="position:absolute;left:798.5px;top:62px;width:201.5px;height:33px;background:#fafafa;border-bottom:1px solid #d9d9d9;box-sizing:border-box;"></div>
<span class="t" style="left:806.40px;top:74.00px;font-size:11.5px;line-height:11.5px;color:#595959;-webkit-text-stroke:0.58px #595959;transform:scaleX(0.9786);">Insight properties</span>
<div style="position:absolute;left:798.5px;top:131.5px;width:201.5px;height:1px;background:#d9d9d9;"></div>
<svg class="a" style="left:806px;top:106px" width="14" height="14" viewBox="0 0 14 14"><g fill="#5b4fc6"><rect x="0.4" y="3.6" width="2.5" height="9.8"/><rect x="5.4" y="7.4" width="2.5" height="6"/><rect x="10.5" y="0.8" width="2.7" height="12.6"/></g></svg>
<span class="t" style="left:831.00px;top:103.00px;font-size:11.5px;line-height:11.5px;color:#595959;-webkit-text-stroke:0.22px #595959;transform:scaleX(0.9236);">Chart type</span>
<span class="t" style="left:831.00px;top:117.00px;font-size:11px;line-height:11px;color:#4d4d4d;-webkit-text-stroke:0.55px #4d4d4d;transform:scaleX(0.9861);">Bar chart (grouped)</span>
<svg class="a" style="left:982px;top:110px" width="7" height="9" viewBox="0 0 7 9"><path d="M1.4 1.2L5 4.5L1.4 7.8" fill="none" stroke="#b9b4e8" stroke-width="1.2"/></svg>
<span class="t" style="left:806.40px;top:144.00px;font-size:13px;line-height:13px;color:#4d4d4d;-webkit-text-stroke:0.65px #4d4d4d;transform:scaleX(0.9464);">Analysis type</span>
<svg class="a" style="left:980px;top:146px" width="13" height="13" viewBox="-0.5 0 13 13"><circle cx="5.9" cy="5.8" r="5.7" fill="#9c9c9c"/><path d="M4.1 4.6C4.1 2.4 7.8 2.4 7.8 4.6C7.8 5.9 6 5.9 6 7.2" fill="none" stroke="#fff" stroke-width="1.3"/><circle cx="6" cy="9" r="0.85" fill="#fff"/></svg>
<span class="t" style="left:806.40px;top:170.00px;font-size:11px;line-height:11px;color:#595959;-webkit-text-stroke:0.22px #595959;transform:scaleX(0.9424);">Rank</span>
<span class="t" style="left:806.60px;top:216.00px;font-size:13px;line-height:13px;color:#4d4d4d;-webkit-text-stroke:0.65px #4d4d4d;transform:scaleX(0.9436);">Dimensions</span>
<div style="position:absolute;left:806.4px;top:243.3px;width:185.6px;height:27.2px;background:#fafafa;border:1px solid #e6e6e6;border-radius:3px;box-sizing:border-box;"></div>
<span class="t" style="left:817.40px;top:253.00px;font-size:11.5px;line-height:11.5px;color:#595959;-webkit-text-stroke:0.58px #595959;transform:scaleX(0.9260);">EmployeeName</span>
<svg class="a" style="left:972px;top:252px" width="8" height="10" viewBox="-0.5 -0.5 8 10"><path d="M1.4 1.2L5 4.5L1.4 7.8" fill="none" stroke="#404040" stroke-width="1.4"/></svg>
<span class="t" style="left:806.60px;top:306.00px;font-size:13px;line-height:13px;color:#4d4d4d;-webkit-text-stroke:0.65px #4d4d4d;transform:scaleX(0.8990);">Measures</span>
<div style="position:absolute;left:806.4px;top:333px;width:185.6px;height:27.2px;background:#fafafa;border:1px solid #e6e6e6;border-radius:3px;box-sizing:border-box;"></div>
<div style="position:absolute;left:852px;top:333.5px;width:1px;height:26.2px;background:#e6e6e6;"></div>
<span class="t" style="left:819.60px;top:343.00px;font-size:11px;line-height:11px;color:#595959;-webkit-text-stroke:0.55px #595959;transform:scaleX(0.8719);">Sum</span>
<span class="t" style="left:862.50px;top:343.00px;font-size:11.5px;line-height:11.5px;color:#595959;-webkit-text-stroke:0.58px #595959;transform:scaleX(0.9219);">Gross Profit</span>
<svg class="a" style="left:972px;top:342px" width="8" height="10" viewBox="-0.5 -0.3 8 10"><path d="M1.4 1.2L5 4.5L1.4 7.8" fill="none" stroke="#404040" stroke-width="1.4"/></svg>
<div style="position:absolute;left:0px;top:964.5px;width:1000px;height:29.5px;background:#fff;border-top:1px solid #d0d0d0;box-sizing:border-box;"></div>
<div style="position:absolute;left:0px;top:965.5px;width:95px;height:27px;background:#f4f4f4;"></div>
<svg class="a" style="left:8px;top:975px" width="15" height="12" viewBox="-0.5 0 15 12"><rect x="0.9" y="0.9" width="11.8" height="8.8" fill="#fff" stroke="#404040" stroke-width="1.2"/><rect x="0.9" y="0.9" width="3.6" height="8.8" fill="#404040"/></svg>
<span class="t" style="left:28.50px;top:974.00px;font-size:12px;line-height:12px;color:#404040;-webkit-text-stroke:0.6px #404040;transform:scaleX(0.8610);">Hide assets</span>
<div style="position:absolute;left:882.5px;top:965px;width:115px;height:28px;background:#fafafa;border:1px solid #7fb0c8;border-bottom:none;border-radius:3px 3px 0 0;box-sizing:border-box;"></div>
<span class="t" style="left:895.50px;top:974.00px;font-size:12px;line-height:12px;color:#404040;-webkit-text-stroke:0.6px #404040;transform:scaleX(0.9246);">Hide properties</span>
<svg class="a" style="left:976px;top:975px" width="16" height="12" viewBox="-0.5 0 16 12"><rect x="0.9" y="0.9" width="12.6" height="8.8" fill="#fff" stroke="#404040" stroke-width="1.2"/><rect x="9.6" y="0.9" width="3.9" height="8.8" fill="#404040"/></svg>
<div style="position:absolute;left:998px;top:0px;width:2px;height:994px;background:#fff;"></div>
<div style="position:absolute;left:999px;top:0px;width:1px;height:994px;background:#7a7a7a;"></div>
<div style="position:absolute;left:999px;top:0px;width:1px;height:12px;background:#1f4848;"></div>
<div style="position:absolute;left:0px;top:0px;width:1px;height:994px;background:#6a6a6a;"></div>
<div style="position:absolute;left:0px;top:140px;width:1px;height:30px;background:#6a3a5a;"></div>
<div style="position:absolute;left:0px;top:993px;width:1000px;height:1px;background:#3a3a3a;"></div>
<div style="position:absolute;left:0px;top:992px;width:1000px;height:1px;background:#b0b0b0;"></div>
</body></html>
